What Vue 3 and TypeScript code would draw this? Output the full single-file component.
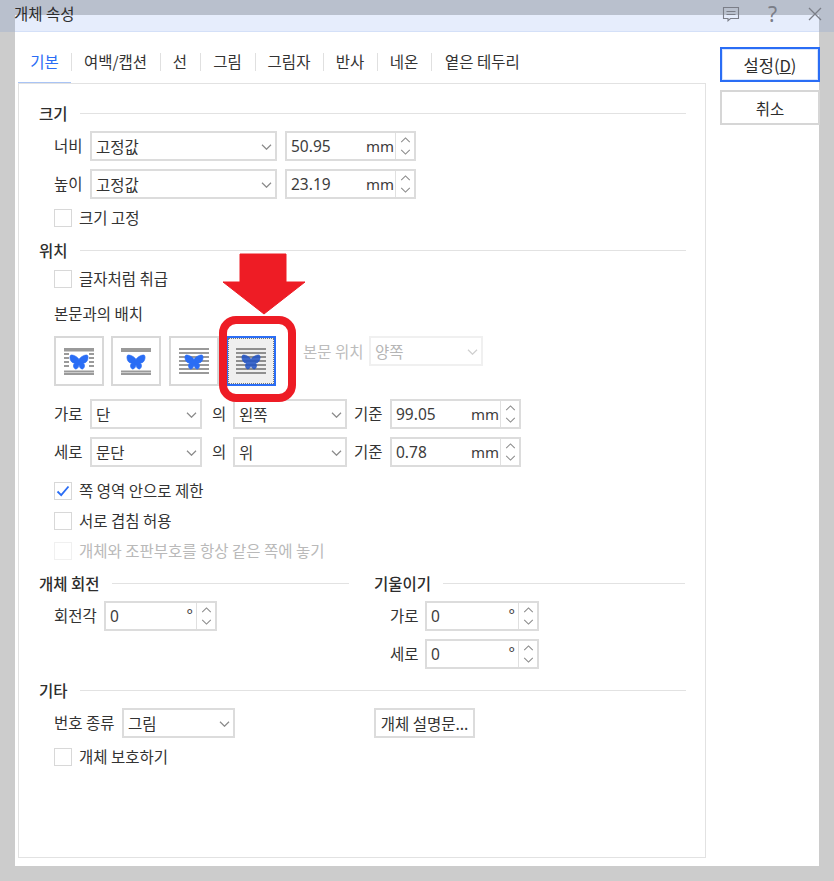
<script setup lang="ts">
const tabs = ['기본', '여백/캡션', '선', '그림', '그림자', '반사', '네온', '옅은 테두리']
const wing = 'M9 4.500C8 2.500 4.500 0 1.500 0C0 0 0 1.500 0 3C.3 6 2 8 4.800 8.200C3 9 3 13 5.500 14C8 14 8.500 11.500 9 10C9.500 11.500 10 14 12.500 14C15 13 15 9 13.200 8.200C16 8 17.700 6 18 3C18 1.500 18 0 16.500 0C13.500 0 10 2.500 9 4.500Z'
interface Seg { x: number; y: number; w: number }
const full = (ys: number[]): Seg[] => ys.map((y) => ({ x: 0, y, w: 30 }))
const side = (ys: number[]): Seg[] => ys.flatMap((y) => [{ x: 0, y, w: 5 }, { x: 25, y, w: 5 }])
const wraps = [
  { segs: [...full([2, 3.5, 24.5, 27]), ...side([7, 11, 15, 19])], fill: '#2a6df5', sel: false },
  { segs: full([2, 4, 24.5, 27]), fill: '#2a6df5', sel: false },
  { segs: full([2, 6, 10, 14, 18, 22, 26]), fill: '#2a6df5', sel: false },
  { segs: full([2, 6, 10, 14, 18, 22, 26]), fill: '#2455c4', sel: true },
]
</script>

<template>
  <div class="page">
    <svg class="defs" width="0" height="0" aria-hidden="true">
      <symbol id="chev" viewBox="0 0 14 8"><path d="M1 1l6 6 6-6" fill="none" stroke="#8a8a8a" stroke-width="1.600" /></symbol>
      <symbol id="chev-off" viewBox="0 0 14 8"><path d="M1 1l6 6 6-6" fill="none" stroke="#cfcfcf" stroke-width="1.600" /></symbol>
      <symbol id="up" viewBox="0 0 12 7"><path d="M1 6l5-5 5 5" fill="none" stroke="#8a8a8a" stroke-width="1.200" /></symbol>
      <symbol id="down" viewBox="0 0 12 7"><path d="M1 1l5 5 5-5" fill="none" stroke="#8a8a8a" stroke-width="1.200" /></symbol>
    </svg>

    <header class="titlebar">
      <div class="title-glow"></div>
      <span class="title">개체 속성</span>
      <div class="win-icons">
        <svg width="18" height="16" viewBox="0 0 18 16">
          <path d="M1.500 1.500h15v11h-8l-2.500 2.200v-2.200h-4.500z" fill="none" stroke="#7b7e88" stroke-width="1.100" />
          <path d="M4.500 5.500h9M4.500 8.500h9" stroke="#7b7e88" stroke-width="1.100" />
        </svg>
        <span class="help">?</span>
        <svg width="14" height="14" viewBox="0 0 14 14">
          <path d="M1 1l12 12M13 1L1 13" stroke="#7b7e88" stroke-width="1.300" fill="none" />
        </svg>
      </div>
    </header>

    <main class="window">
      <section class="left">
        <nav class="tabs">
          <div v-for="(t, i) in tabs" :key="t" class="tab" :class="{ active: i === 0 }">
            <span class="tab-text">{{ t }}</span>
          </div>
        </nav>

        <div class="panel">
          <div class="heading"><span>크기</span><i></i></div>
          <div class="row r8">
            <span class="lab w36">너비</span>
            <div class="sel w187"><span>고정값</span><svg class="chev"><use href="#chev" /></svg></div>
            <div class="spin w131 ml8"><span class="val">50.95</span><span class="unit">mm</span>
              <div class="btns"><svg><use href="#up" /></svg><svg><use href="#down" /></svg></div></div>
          </div>
          <div class="row r8">
            <span class="lab w36">높이</span>
            <div class="sel w187"><span>고정값</span><svg class="chev"><use href="#chev" /></svg></div>
            <div class="spin w131 ml8"><span class="val">23.19</span><span class="unit">mm</span>
              <div class="btns"><svg><use href="#up" /></svg><svg><use href="#down" /></svg></div></div>
          </div>
          <label class="check m10"><b></b>크기 고정</label>

          <div class="heading m13"><span>위치</span><i></i></div>
          <label class="check m10"><b></b>글자처럼 취급</label>
          <div class="sub">본문과의 배치</div>

          <div class="wrap-row">
            <div v-for="(w, i) in wraps" :key="i" class="wrap-btn" :class="{ selected: w.sel }">
              <svg width="30" height="30" viewBox="0 0 30 30">
                <rect v-for="(s, k) in w.segs" :key="k" :x="s.x" :y="s.y" :width="s.w" height="2" :fill="w.sel ? '#8f8f8f' : '#9a9a9a'" />
                <path :d="wing" :fill="w.fill" :stroke="w.fill" stroke-width="0.700" :fill-opacity="w.sel ? 0.88 : 1" transform="translate(6 9)" />
              </svg>
            </div>
            <span class="lab off pos-lab">본문 위치</span>
            <div class="sel sel-off w114"><span>양쪽</span><svg class="chev"><use href="#chev-off" /></svg></div>
          </div>

          <div class="row r13">
            <span class="lab w36">가로</span>
            <div class="sel w112"><span>단</span><svg class="chev"><use href="#chev" /></svg></div>
            <span class="lab of">의</span>
            <div class="sel w114"><span>왼쪽</span><svg class="chev"><use href="#chev" /></svg></div>
            <span class="lab base">기준</span>
            <div class="spin w131"><span class="val">99.05</span><span class="unit">mm</span>
              <div class="btns"><svg><use href="#up" /></svg><svg><use href="#down" /></svg></div></div>
          </div>
          <div class="row r8">
            <span class="lab w36">세로</span>
            <div class="sel w112"><span>문단</span><svg class="chev"><use href="#chev" /></svg></div>
            <span class="lab of">의</span>
            <div class="sel w114"><span>위</span><svg class="chev"><use href="#chev" /></svg></div>
            <span class="lab base">기준</span>
            <div class="spin w131"><span class="val">0.78</span><span class="unit">mm</span>
              <div class="btns"><svg><use href="#up" /></svg><svg><use href="#down" /></svg></div></div>
          </div>

          <label class="check m15">
            <b><svg width="16" height="16" viewBox="0 0 16 16"><path d="M2.500 8.500l3.700 3.700 7.300-8.700" fill="none" stroke="#2a6df5" stroke-width="1.800" /></svg></b>쪽 영역 안으로 제한
          </label>
          <label class="check m12"><b></b>서로 겹침 허용</label>
          <label class="check disabled m12"><b></b>개체와 조판부호를 항상 같은 쪽에 놓기</label>

          <div class="columns">
            <div class="col-a">
              <div class="heading"><span>개체 회전</span><i></i></div>
              <div class="row r8">
                <span class="lab w50">회전각</span>
                <div class="spin w113"><span class="val">0</span><span class="unit deg">°</span>
                  <div class="btns"><svg><use href="#up" /></svg><svg><use href="#down" /></svg></div></div>
              </div>
            </div>
            <div class="col-b">
              <div class="heading"><span>기울이기</span><i></i></div>
              <div class="row r8 indent">
                <span class="lab w35">가로</span>
                <div class="spin w114"><span class="val">0</span><span class="unit deg">°</span>
                  <div class="btns"><svg><use href="#up" /></svg><svg><use href="#down" /></svg></div></div>
              </div>
              <div class="row r8 indent">
                <span class="lab w35">세로</span>
                <div class="spin w114"><span class="val">0</span><span class="unit deg">°</span>
                  <div class="btns"><svg><use href="#up" /></svg><svg><use href="#down" /></svg></div></div>
              </div>
            </div>
          </div>

          <div class="heading m11"><span>기타</span><i></i></div>
          <div class="row r8">
            <span class="lab w68">번호 종류</span>
            <div class="sel w113"><span>그림</span><svg class="chev"><use href="#chev" /></svg></div>
            <button class="plain" type="button">개체 설명문...</button>
          </div>
          <label class="check m10"><b></b>개체 보호하기</label>
        </div>
      </section>

      <aside class="actions">
        <button class="act primary" type="button">설정(<u>D</u>)</button>
        <button class="act" type="button">취소</button>
      </aside>

      <div class="mark" aria-hidden="true">
        <svg width="84" height="62" viewBox="0 0 84 62"><path d="M18 1h46v28h19L42 61 1 29h17z" fill="#ee1c25" stroke="#ee1c25" stroke-linejoin="round" /></svg>
        <div class="ring"></div>
      </div>
    </main>
  </div>
</template>

<style>
html, body { margin: 0; background: #cccccc; }
</style>

<style scoped>
.page {
  position: relative;
  width: 834px;
  height: 881px;
  overflow: hidden;
  background: #cccccc;
  color: #333;
  font-family: "Noto Sans CJK KR", "Noto Sans", sans-serif;
  font-size: 15.500px;
}
.defs { position: absolute; }
.titlebar {
  position: relative;
  height: 32px;
  background: #b9c0cd;
  display: flex;
  align-items: flex-end;
  padding: 0 15px;
  box-sizing: border-box;
}
.title-glow {
  flex: 1;
  height: 17px;
  box-sizing: border-box;
  background: #e6edfc;
  border-bottom: 1px solid #d4e0f8;
}
.title {
  position: absolute;
  left: 14px;
  top: 2px;
  line-height: 22px;
  color: #2d2d2d;
}
.win-icons {
  position: absolute;
  right: 12px;
  top: 5px;
  display: flex;
  align-items: center;
  height: 18px;
}
.win-icons svg:first-child { margin-right: 28px; }
.help {
  font-family: "Noto Sans", sans-serif;
  font-size: 21px;
  line-height: 18px;
  color: #7b7e88;
  width: 12px;
  margin-right: 28px;
}
.window {
  position: relative;
  margin-left: 15px;
  width: 804px;
  height: 834px;
  background: #fff;
  display: flex;
  padding-left: 3px;
  box-sizing: border-box;
}
.left { width: 688px; display: flex; flex-direction: column; flex: none; }
.tabs {
  height: 51px;
  display: flex;
  align-items: flex-start;
  padding-top: 21px;
  box-sizing: border-box;
}
.tab {
  position: relative;
  height: 30px;
  display: flex;
  justify-content: center;
  box-sizing: border-box;
  padding: 0;
}
.tab-text { line-height: 18px; height: 18px; white-space: nowrap; margin-top: -1px; }
.tab + .tab::before {
  content: "";
  position: absolute;
  left: 0;
  top: 0;
  width: 1px;
  height: 18px;
  background: #e0e0e0;
}
.tab.active { color: #2a6df5; width: 53px; border-bottom: 1px solid #a9c4f5; }
.tab:nth-child(2) { width: 89px; }
.tab:nth-child(3) { width: 40px; }
.tab:nth-child(4) { width: 55px; }
.tab:nth-child(5) { width: 68px; }
.tab:nth-child(6) { width: 54px; }
.tab:nth-child(7) { width: 54px; }
.tab:nth-child(8) { padding-left: 14px; }
.panel {
  width: 688px;
  height: 775px;
  box-sizing: border-box;
  border: 1px solid #e2e2e2;
  padding: 19px 19px 0 20px;
  position: relative;
}
.heading {
  display: flex;
  align-items: center;
  height: 20px;
  gap: 12px;
  font-weight: 500;
  color: #2d2d2d;
}
.heading span { white-space: nowrap; line-height: 18px; margin-top: -1px; }
.heading i { flex: 1; height: 1px; background: #e2e2e2; }
.m10 { margin-top: 10px; }
.m11 { margin-top: 11px; }
.m12 { margin-top: 12px; }
.m13 { margin-top: 13px; }
.m15 { margin-top: 15px; }
.row { display: flex; align-items: center; height: 30px; padding-left: 15px; }
.r8 { margin-top: 8px; }
.r13 { margin-top: 13px; }
.lab { white-space: nowrap; line-height: 18px; margin-bottom: 2px; }
.w36 { width: 36px; }
.w50 { width: 50px; }
.w35 { width: 35px; }
.w68 { width: 68px; }
.of { width: 21px; margin-left: 10px; }
.base { width: 36px; margin-left: 7px; }
.off { color: #bcbcbc; }
.sel, .spin, .plain {
  height: 30px;
  box-sizing: border-box;
  border: 2px solid #dcdcdc;
  background: #fff;
}
.sel {
  position: relative;
  display: flex;
  align-items: center;
  padding-left: 4px;
  line-height: 20px;
}
.chev { position: absolute; right: 3px; top: 11px; width: 11px; height: 6px; }
.sel-off { border-color: #f0f0f0; color: #b5b5b5; }
.w187 { width: 187px; }
.w131 { width: 131px; }
.w112 { width: 112px; }
.w113 { width: 113px; }
.w114 { width: 114px; }
.ml8 { margin-left: 8px; }
.spin { display: flex; align-items: center; position: relative; padding-left: 4px; }
.val { font-family: "Noto Sans", sans-serif; font-size: 15.500px; line-height: 20px; flex: 1; color: #3c3c3c; }
.unit { font-family: "Noto Sans", sans-serif; font-size: 15px; line-height: 20px; margin-right: 1px; color: #3c3c3c; }
.deg { align-self: flex-start; margin-top: 1px; margin-right: 3px; }
.btns {
  width: 19px;
  height: 26px;
  border-left: 1px solid #e0e0e0;
  display: flex;
  flex-direction: column;
  align-items: center;
  justify-content: space-between;
  padding: 4px 0;
  box-sizing: border-box;
}
.btns svg { width: 11px; height: 6px; }
.check {
  display: flex;
  align-items: flex-start;
  height: 18px;
  margin-left: 15px;
  gap: 7px;
  line-height: 16px;
  white-space: nowrap;
}
.check b {
  width: 18px;
  height: 18px;
  box-sizing: border-box;
  border: 1.500px solid #d8d8d8;
  display: flex;
  align-items: center;
  justify-content: center;
  background: #fff;
}
.check.disabled { color: #b9b9b9; }
.check.disabled b { border-color: #f0f0f0; }
.sub { margin: 15px 0 0 15px; line-height: 20px; height: 20px; }
.wrap-row { display: flex; align-items: flex-start; margin: 13px 0 0 15px; height: 50px; }
.wrap-btn {
  width: 50px;
  height: 50px;
  box-sizing: border-box;
  border: 2px solid #d8d8d8;
  display: flex;
  align-items: center;
  justify-content: center;
  background: #fff;
  margin-right: 7px;
}
.wrap-btn:nth-child(2) { margin-right: 8px; }
.wrap-btn.selected {
  border-color: #2a6df5;
  background: #efefef;
  outline: 1px dotted #777;
  outline-offset: -3px;
  margin-right: 27px;
}
.pos-lab { margin-right: 6px; line-height: 30px; width: 60px; margin-bottom: 0; }
.columns { display: flex; margin-top: 13px; gap: 25px; }
.col-a { width: 310px; }
.col-b { width: 311px; }
.indent { padding-left: 16px; }
.plain {
  margin-left: 139px;
  width: 101px;
  padding: 0;
  font: inherit;
  color: #333;
  line-height: 20px;
}
.actions {
  width: 100px;
  margin-left: 14px;
  padding-top: 15px;
  display: flex;
  flex-direction: column;
  gap: 8px;
  flex: none;
}
.act {
  width: 100px;
  height: 35px;
  box-sizing: border-box;
  border: 2px solid #d6d6d6;
  background: #fff;
  font: inherit;
  color: #2d2d2d;
  padding: 0;
}
.act.primary {
  font-size: 16.500px;
  border: 2px solid #2a6df5;
  box-shadow: inset 0 0 0 1px #d9e5fc;
}
.mark { position: absolute; left: 204px; top: 221px; width: 82px; }
.mark svg { position: absolute; left: 3px; top: 0; }
.ring {
  position: absolute;
  left: 0;
  top: 63px;
  width: 77px;
  height: 86px;
  box-sizing: border-box;
  border: 8px solid #ee1c25;
  border-radius: 17px;
}
</style>
